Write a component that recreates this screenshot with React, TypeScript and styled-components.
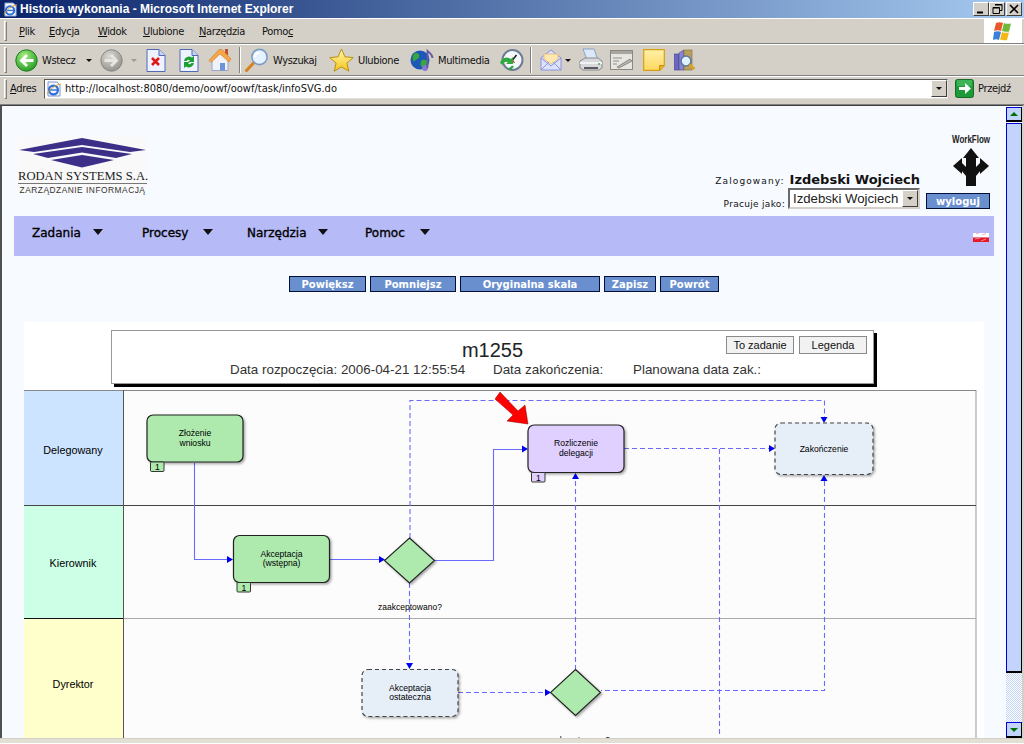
import React from "react";
import styled, { createGlobalStyle } from "styled-components";

const Global = createGlobalStyle`
  html, body { margin: 0; padding: 0; background: #d4d0c8; overflow: hidden; }
  * { box-sizing: border-box; }
  body { font-family: "DejaVu Sans", sans-serif; }
`;

const Window = styled.div`
  width: 1024px; height: 744px; display: flex; flex-direction: column; overflow: hidden; background: #d4d0c8;
`;
const TitleBar = styled.div`
  height: 18px; flex: none; display: flex; align-items: center; padding: 0 2px 0 3px;
  background: linear-gradient(90deg, #0a246a 0%, #a6caf0 100%);
`;
const TitleText = styled.span`
  margin-left: 2px; flex: 1; color: #fff; font: bold 12px "Liberation Sans", sans-serif; white-space: nowrap;
`;
const WinBtn = styled.button<{ $gap?: number }>`
  width: 16px; height: 14px; margin-left: ${p => p.$gap ?? 1}px; padding: 0; background: #d4d0c8; display: flex; align-items: center; justify-content: center;
  border: 1px solid; border-color: #fff #404040 #404040 #fff;
  svg { display: block; }
`;
const Row = styled.div<{ $h: number; $pb?: number }>`
  height: ${p => p.$h}px; flex: none; display: flex; align-items: center; position: relative;
  border-top: 1px solid #fff; border-bottom: 1px solid #808080; padding: 0 0 ${p => p.$pb ?? 0}px 4px;
`;
const Gripper = styled.i<{ $h: number; $mr: number }>`
  width: 3px; height: ${p => p.$h}px; flex: none; border: 1px solid; border-color: #fff #808080 #808080 #fff; margin-right: ${p => p.$mr}px;
`;
const MenuLabel = styled.span<{ $ml?: number; $w: number }>`
  margin-left: ${p => p.$ml ?? 0}px; width: ${p => p.$w}px; flex: none;
  font: 11px "DejaVu Sans", sans-serif; font-stretch: condensed; letter-spacing: -0.35px; color: #111; white-space: nowrap;
  u { text-decoration: underline; text-underline-offset: 1px; }
`;
const FlagBox = styled.div`
  margin-left: auto; margin-right: 2px; width: 38px; height: 24px; background: #fff; display: flex; align-items: center; justify-content: center;
`;
const ToolIcon = styled.svg<{ $ml?: number }>`
  flex: none; margin-left: ${p => p.$ml ?? 0}px; display: block;
`;
const Caret = styled.i<{ $ml: number; $gray?: boolean }>`
  flex: none; width: 0; height: 0; margin-left: ${p => p.$ml}px;
  border-left: 3px solid transparent; border-right: 3px solid transparent;
  border-top: 3px solid ${p => (p.$gray ? "#9a9a9a" : "#111")};
`;
const ToolSep = styled.i<{ $ml: number }>`
  flex: none; width: 2px; height: 26px; margin-left: ${p => p.$ml}px; border-left: 1px solid #808080; border-right: 1px solid #fff;
`;
const AddressInput = styled.div`
  margin-left: 6px; width: 904px; height: 20px; background: #fff; display: flex; align-items: center; padding-left: 1px;
  border: 1px solid; border-color: #5a5a5a #e4e2dc #e4e2dc #5a5a5a; position: relative;
`;
const Url = styled.span`
  margin-left: 3px; flex: 1; font: 11px "DejaVu Sans", sans-serif; font-stretch: condensed; letter-spacing: 0.02px; color: #111; white-space: nowrap;
`;
const DropBtn = styled.span`
  width: 16px; height: 17px; margin-right: 0; background: #d4d0c8; border: 1px solid; border-color: #fff #404040 #404040 #fff;
  display: flex; align-items: center; justify-content: center;
`;
const Viewport = styled.div`
  flex: 1; display: flex; min-height: 0; border-top: 1px solid #404040; border-left: 2px solid #505050; border-right: 2px solid #d4d0c8;
`;
const Page = styled.main`
  flex: 1; min-width: 0; overflow: hidden; background: #f7faff; padding: 0 12px;
`;
const Header = styled.header`
  height: 110px; display: flex; justify-content: space-between; padding: 0 4px 7px;
`;
const Logo = styled.div`
  margin-top: 31px; width: 129px; height: 56px; background: #f9f9f9; display: flex; flex-direction: column; align-items: center;
  svg { display: block; flex: none; }
`;
const LogoName = styled.div`
  margin-top: 1px; width: 129px; text-align: center; font: 12.6px/12px "Liberation Serif", serif; color: #222; white-space: nowrap; border-bottom: 1px solid #777; padding-bottom: 1px;
`;
const LogoSub = styled.div`
  margin-top: 1px; font: 8.4px/10px "Liberation Sans", sans-serif; letter-spacing: 0.5px; color: #333; white-space: nowrap;
`;
const HeaderRight = styled.div`
  display: flex; gap: 6px; align-items: flex-end;
`;
const UserCol = styled.div`
  display: flex; flex-direction: column; align-items: flex-end; gap: 0;
`;
const UserLine = styled.div`
  display: flex; align-items: flex-end; gap: 3px; height: 21px;
`;
const UserTop = styled.div`
  display: flex; align-items: baseline; gap: 5px; height: 16px; line-height: 16px;
`;
const SmallLabel = styled.span<{ $ls: number }>`
  font: 9px "DejaVu Sans", sans-serif; letter-spacing: ${p => p.$ls}px; color: #111; white-space: nowrap;
`;
const UserName = styled.span`
  font: bold 13px "DejaVu Sans", sans-serif; color: #111; white-space: nowrap;
`;
const SelectBox = styled.div`
  width: 132px; height: 21px; background: #fff; border: 2px solid; border-color: #6a6a6a #d4d0c8 #d4d0c8 #6a6a6a;
  display: flex; align-items: center; padding-left: 3px; justify-content: space-between;
`;
const SelectText = styled.span`
  font: 13.2px "Liberation Sans", sans-serif; color: #222; white-space: nowrap;
`;
const ActionCol = styled.div`
  width: 64px; display: flex; flex-direction: column; align-items: flex-end; height: 76px; justify-content: space-between;
`;
const WfLogo = styled.svg`
  display: block; overflow: visible;
`;
const BlueBtn = styled.button<{ $w: number }>`
  width: ${p => p.$w}px; height: 16px; padding: 0; background: #6a8fcf; border: 1px solid #00103a; color: #fff;
  font: bold 10px "DejaVu Sans", sans-serif; line-height: 13px; white-space: nowrap; flex: none;
`;
const MainMenu = styled.nav`
  height: 40px; background: #b6baf7; display: flex; align-items: center; padding-left: 18px;
`;
const MenuItem = styled.div<{ $w: number }>`
  width: ${p => p.$w}px; flex: none; display: flex; align-items: center; padding-bottom: 6px;
`;
const MenuText = styled.span<{ $w: number }>`
  font: 12px "DejaVu Sans", sans-serif; -webkit-text-stroke: 0.35px #000; color: #000; width: ${p => p.$w}px; white-space: nowrap;
`;
const MenuArrow = styled.i`
  width: 0; height: 0; margin-top: -3px; border-left: 5px solid transparent; border-right: 5px solid transparent; border-top: 6px solid #111;
`;
const Flag = styled.svg`
  margin-left: auto; margin-right: 5px; margin-top: 2px; display: block;
`;
const ActionBar = styled.div`
  margin-top: 20px; display: flex; justify-content: center; gap: 4px;
`;
const Canvas = styled.section`
  margin: 30px 10px 0; background: #fff; height: 440px; padding-top: 8px;
`;
const InfoCard = styled.div`
  margin-left: 87px; width: 763px; height: 54px; background: #fff; border: 1px solid #999; box-shadow: 3px 3px 0 #000;
  font-family: "Liberation Sans", sans-serif; color: #333;
`;
const CardTop = styled.div`
  display: grid; grid-template-columns: 1fr auto 1fr; height: 31px; padding: 5px 6px 0;
`;
const CardTitle = styled.div`
  grid-column: 2; font-size: 20px; line-height: 24px; margin-top: 2px; color: #222;
`;
const CardBtns = styled.div`
  grid-column: 3; display: flex; justify-content: flex-end; gap: 5px;
`;
const CardBtn = styled.button`
  width: 68px; height: 18px; padding: 0; background: #f2f2f2; border: 1px solid #8a8a8a; font: 11px "Liberation Sans", sans-serif; color: #111;
`;
const CardInfo = styled.div`
  display: flex; padding-left: 118px; font-size: 13.4px; line-height: 16px;
`;
const CardField = styled.span<{ $w: number }>`
  width: ${p => p.$w}px; flex: none; white-space: nowrap;
`;
const Diagram = styled.svg`
  display: block; margin-top: 6px;
  text { font-family: "Liberation Sans", sans-serif; fill: #000; text-anchor: middle; }
`;
const Scrollbar = styled.aside`
  width: 16px; flex: none; background: #f7faff; display: flex; flex-direction: column; padding-top: 1px;
`;
const ScrollBtn = styled.div<{ $h: number }>`
  height: ${p => p.$h}px; flex: none; background: #c2d4fb; border: 1px solid #0000e0; border-right-color: #000; border-bottom: 2px solid #000;
  display: flex; align-items: center; justify-content: center;
`;
const ScrollTri = styled.i<{ $down?: boolean }>`
  width: 0; height: 0; border-left: 4px solid transparent; border-right: 4px solid transparent;
  ${p => (p.$down ? "border-top: 4px solid #007000;" : "border-bottom: 4px solid #007000;")}
`;
const ScrollThumb = styled.div`
  height: 550px; margin-top: 1px; flex: none; background: #c2d4fb; border: 1px solid #0000e0; border-right-color: #000; border-bottom: 2px solid #000;
`;
const ScrollTrack = styled.div`
  flex: 1; background: repeating-conic-gradient(#c2d4fb 0 25%, #fff 0 50%) 0 0 / 2px 2px;
`;
const StatusEdge = styled.div`
  height: 6px; flex: none; background: #e2dfd4; border-top: 1px solid #d4d0c8; border-bottom: 1px solid #fff;
`;

const IeIcon = ({ s = 16, ml = 0 }: { s?: number; ml?: number }) => (
  <ToolIcon $ml={ml} width={s} height={s} viewBox="0 0 16 16">
    <path d="M2 1h9l3 3v11H2z" fill="#f4f7ff" stroke="#7f93c8" />
    <circle cx="7.5" cy="9" r="4.4" fill="none" stroke="#2a70d8" strokeWidth="2.2" />
    <path d="M4 9h7" stroke="#2a70d8" strokeWidth="1.4" />
    <path d="M1 13C4 8 9 4 15 3" fill="none" stroke="#e8a020" strokeWidth="1" />
  </ToolIcon>
);

const NavIcon = ({ ml, dir, gray }: { ml: number; dir: "l" | "r"; gray?: boolean }) => {
  const id = gray ? "navg" : "navc";
  return (
    <ToolIcon $ml={ml} width={23} height={23} viewBox="0 0 23 23">
      <defs>
        <radialGradient id={id} cx="0.4" cy="0.3" r="0.8">
          <stop offset="0" stopColor={gray ? "#dcdad4" : "#a8ee80"} />
          <stop offset="1" stopColor={gray ? "#8c8a84" : "#18941c"} />
        </radialGradient>
      </defs>
      <circle cx="11.5" cy="11.5" r="10.7" fill={`url(#${id})`} stroke={gray ? "#8a8880" : "#1c7a20"} />
      <path
        d={dir === "l" ? "M4.5 11.5l6.5-6.5 2 2-3 3h8.5v3H10l3 3-2 2z" : "M18.5 11.5 12 5l-2 2 3 3H4.5v3H13l-3 3 2 2z"}
        fill={gray ? "#e8e6e0" : "#fff"}
      />
    </ToolIcon>
  );
};
const DocIcon = ({ ml, kind }: { ml: number; kind: "x" | "r" }) => (
  <ToolIcon $ml={ml} width={20} height={23} viewBox="0 0 20 23">
    <path d="M1 .5h12l6 6v16H1z" fill="#eef3ff" stroke="#5068b8" />
    <path d="M13 .5v6h6" fill="#c8d4f4" stroke="#5068b8" />
    {kind === "x" ? (
      <path d="M6 9l7 7M13 9l-7 7" stroke="#e01818" strokeWidth="2.6" />
    ) : (
      <>
        <path d="M5 12a5 5 0 0 1 8-3.5l2-1.5v6h-6l2-1.6a2.6 2.6 0 0 0-3.5 .6z" fill="#1ea030" />
        <path d="M15 14a5 5 0 0 1-8 3.5L5 19v-6h6l-2 1.6a2.6 2.6 0 0 0 3.5-.6z" fill="#1ea030" />
      </>
    )}
  </ToolIcon>
);
const HomeIcon = ({ ml }: { ml: number }) => (
  <ToolIcon $ml={ml} width={24} height={24} viewBox="0 0 24 24">
    <path d="M4 11v11.500h16V11L12 5z" fill="#f0f2fa" stroke="#9aa4c8" />
    <path d="M12 15h5v7.500h-5z" fill="#6c94d8" />
    <rect x="17" y="1" width="3" height="6" fill="#c05030" />
    <path d="M1 12.5 11 1.500h3L23 11l-2 3-9-8-9 8.500z" fill="#f4a648" stroke="#d07a28" strokeWidth=".6" />
  </ToolIcon>
);
const SearchIcon = ({ ml }: { ml: number }) => (
  <ToolIcon $ml={ml} width={24} height={24} viewBox="0 0 24 24">
    <path d="M8.5 15 1.5 22.5" stroke="#d8801c" strokeWidth="3" strokeLinecap="round" />
    <circle cx="14.5" cy="9" r="7.6" fill="#e6f2ff" stroke="#7c9cc4" strokeWidth="1.6" />
    <path d="M10 9a4.5 4.5 0 0 1 4.5-4.5" fill="none" stroke="#fff" strokeWidth="2" />
  </ToolIcon>
);
const StarIcon = ({ ml }: { ml: number }) => (
  <ToolIcon $ml={ml} width={25} height={24} viewBox="0 0 25 24">
    <defs>
      <linearGradient id="starg" x1="0" y1="0" x2="0" y2="1">
        <stop offset="0" stopColor="#fff8b0" />
        <stop offset="1" stopColor="#f8c418" />
      </linearGradient>
    </defs>
    <path d="M12.5 1l3.4 7.8 8.3.8-6.3 5.5 1.9 8.1-7.3-4.3-7.3 4.3 1.9-8.1L.8 9.6l8.3-.8z" fill="url(#starg)" stroke="#b89010" />
  </ToolIcon>
);
const MediaIcon = ({ ml }: { ml: number }) => (
  <ToolIcon $ml={ml} width={24} height={24} viewBox="0 0 24 24">
    <circle cx="10" cy="12" r="9.5" fill="#1c58b8" />
    <path d="M5 5c3 0 5 1 4 4s-4 2-5 5c-1-2-3-6 1-9zM12 12c3-1 6 0 5 3s-3 5-5 4-2-5 0-7z" fill="#38a838" />
    <circle cx="15" cy="20" r="3" fill="#8878d0" />
    <path d="M17.5 20V3c2 2 5 3 5 7" fill="none" stroke="#6458a8" strokeWidth="1.8" />
  </ToolIcon>
);
const HistoryIcon = ({ ml }: { ml: number }) => (
  <ToolIcon $ml={ml} width={25} height={24} viewBox="0 0 25 24">
    <circle cx="13.5" cy="12" r="10" fill="#f4f8fc" stroke="#6c7c94" strokeWidth="2" />
    <path d="M13.5 12l4-5" stroke="#222" strokeWidth="1.6" />
    <path d="M13.5 12l2 3" stroke="#c03020" strokeWidth="1.2" />
    <path d="M1 15a7 7 0 0 1 11-4l2-2v7H7l2-2a3.5 3.5 0 0 0-5 3z" fill="#30a840" />
    <path d="M10 21a6 6 0 0 0 4-3" stroke="#30a840" strokeWidth="2.4" fill="none" />
  </ToolIcon>
);
const MailIcon = ({ ml }: { ml: number }) => (
  <ToolIcon $ml={ml} width={22} height={24} viewBox="0 0 22 24">
    <path d="M1 10 11 2l10 8v12H1z" fill="#dce2fa" stroke="#8a94d8" />
    <path d="M4 11V6h14v5l-7 5z" fill="#fde8b0" stroke="#e8b070" strokeWidth=".7" />
    <path d="M1 22l8-8M21 22l-8-8M1 10l10 8 10-8" fill="none" stroke="#8a94d8" />
  </ToolIcon>
);
const PrintIcon = ({ ml }: { ml: number }) => (
  <ToolIcon $ml={ml} width={24} height={24} viewBox="0 0 24 24">
    <path d="M4 1h11l4 11H8z" fill="#dce8fa" stroke="#8aa0c4" />
    <path d="M1 13l5-3h13l4 3v7l-3 2H4l-3-2z" fill="#d8d8dc" stroke="#8a8a90" />
    <path d="M1 14h22v2H1z" fill="#f2f2f4" />
    <path d="M5 19h14v2H5z" fill="#5a5a60" />
    <circle cx="20" cy="16" r="1" fill="#40b840" />
  </ToolIcon>
);
const EditIcon = ({ ml }: { ml: number }) => (
  <ToolIcon $ml={ml} width={24} height={20} viewBox="0 0 24 20">
    <rect x=".5" y=".5" width="22" height="19" fill="#e8e6e0" stroke="#8a8880" />
    <rect x="1" y="1" width="21" height="3" fill="#a8a6a0" />
    <path d="M3 8h9M3 11h6M3 14h4" stroke="#908e88" />
    <path d="M7 17 20 9l2 2-13 7z" fill="#b8b6b0" stroke="#706e68" strokeWidth=".7" />
  </ToolIcon>
);
const NoteIcon = ({ ml }: { ml: number }) => (
  <ToolIcon $ml={ml} width={22} height={22} viewBox="0 0 22 22">
    <defs>
      <linearGradient id="noteg" x1="0" y1="0" x2="0" y2="1">
        <stop offset="0" stopColor="#fff0a8" />
        <stop offset="1" stopColor="#ffd860" />
      </linearGradient>
    </defs>
    <path d="M.7.7h20.6v16l-4.6 4.6H.7z" fill="url(#noteg)" stroke="#d8a010" strokeWidth="1.2" />
    <path d="M16.5 21v-4.5H21" fill="#e8b020" stroke="#c89010" />
  </ToolIcon>
);
const ResearchIcon = ({ ml }: { ml: number }) => (
  <ToolIcon $ml={ml} width={22} height={22} viewBox="0 0 22 22">
    <rect x="0" y="5" width="5" height="16" fill="#6c68c0" stroke="#48448c" strokeWidth=".6" />
    <path d="M5 4l5-3v20H5z" fill="#8884d8" stroke="#48448c" strokeWidth=".6" />
    <rect x="10" y="1" width="8" height="20" fill="#b8a060" stroke="#806c30" strokeWidth=".6" />
    <circle cx="12" cy="12" r="5" fill="#dff0ff" stroke="#5878a0" strokeWidth="1.6" />
    <path d="M15.5 15.5l5 4.5" stroke="#e0a020" strokeWidth="2.4" />
  </ToolIcon>
);
const GoIcon = () => (
  <ToolIcon $ml={7} width={19} height={19} viewBox="0 0 19 19">
    <rect x=".5" y=".5" width="18" height="18" rx="2" fill="#1c9a38" stroke="#186a28" />
    <path d="M2 1h15v6H2z" fill="#52c468" opacity=".6" />
    <path d="M4 8h6V4l6 5.5-6 5.5v-4H4z" fill="#fff" />
  </ToolIcon>
);
const XpFlag = () => (
  <ToolIcon width={21} height={19} viewBox="0 0 21 19">
    <path d="M3 1c2-1 5-1 7 0l-2 8c-2-1-5-1-7 0z" fill="#e8582c" />
    <path d="M11 1c2 1 5 1 7 .5l-2 8c-2 .5-5 0-7-.5z" fill="#70b838" />
    <path d="M1 10c2-1 5-1 7 0l-2 8c-2-1-4-1-6 0z" fill="#3a80d8" />
    <path d="M9 10c2 1 5 1 7 .5l-2 7.5c-2 .5-5 0-7-.5z" fill="#f4b818" />
  </ToolIcon>
);

const BLUE = "#0000f0";
const LINE = "#6a6aff";

type TriDir = "r" | "u" | "d";
const Tri = ({ x, y, d }: { x: number; y: number; d: TriDir }) => {
  const pts =
    d === "r"
      ? `${x},${y} ${x - 6},${y - 3.5} ${x - 6},${y + 3.5}`
      : d === "u"
      ? `${x},${y} ${x - 3.5},${y + 6} ${x + 3.5},${y + 6}`
      : `${x},${y} ${x - 3.5},${y - 6} ${x + 3.5},${y - 6}`;
  return <polygon points={pts} fill={BLUE} />;
};
const Wire = ({ d, dashed }: { d: string; dashed?: boolean }) => (
  <path d={d} fill="none" stroke={LINE} strokeWidth="1.1" strokeDasharray={dashed ? "5 3" : undefined} />
);
const TaskNode = ({ x, y, w, h, fill, lines, dashed, tag }: { x: number; y: number; w: number; h: number; fill: string; lines: string[]; dashed?: boolean; tag?: number }) => (
  <g>
    <rect x={x} y={y} width={w} height={h} rx={6} fill={fill} stroke={dashed ? "#444" : "#222"} strokeWidth="1.2" strokeDasharray={dashed ? "4 3" : undefined} filter="url(#sh)" />
    {lines.map((l, i) => (
      <text key={l} x={x + w / 2} y={y + h / 2 + 3 - (lines.length - 1) * 4.5 + i * 9.5 + (lines.length === 1 ? 0 : -1)} fontSize="8.6">
        {l}
      </text>
    ))}
    {tag !== undefined && (
      <g>
        <rect x={tag} y={y + h} width={13.5} height={9.5} rx={1} fill={fill} stroke="#222" strokeWidth=".9" />
        <text x={tag + 7} y={y + h + 8} fontSize="8.6">1</text>
      </g>
    )}
  </g>
);
const Gate = ({ cx, cy, rx, ry }: { cx: number; cy: number; rx: number; ry: number }) => (
  <polygon points={`${cx},${cy - ry} ${cx + rx},${cy} ${cx},${cy + ry} ${cx - rx},${cy}`} fill="#aeeaae" stroke="#222" strokeWidth="1.1" filter="url(#sh)" />
);

const Swimlanes = () => (
  <Diagram width={960} height={356} viewBox="24 390 960 356">
    <defs>
      <filter id="sh" x="-10%" y="-10%" width="125%" height="125%">
        <feDropShadow dx="1.5" dy="1.5" stdDeviation="1" floodOpacity="0.35" />
      </filter>
    </defs>
    <rect x="123" y="390" width="853" height="360" fill="#fcfcfc" stroke="#999" />
    <rect x="24" y="390.5" width="99" height="115" fill="#cce4ff" />
    <rect x="24" y="505.5" width="99" height="113" fill="#ccffe6" />
    <rect x="24" y="618.5" width="99" height="130" fill="#ffffcc" />
    <path d="M24 390.5H976" stroke="#888" />
    <path d="M24 505.5H976" stroke="#444" />
    <path d="M24 618.5H123" stroke="#111" />
    <path d="M123 618.5H976" stroke="#aaa" />
    <path d="M123.5 390V750" stroke="#555" />
    <text x="73" y="454" fontSize="10.8">Delegowany</text>
    <text x="73" y="567" fontSize="10.8">Kierownik</text>
    <text x="73" y="688" fontSize="10.8">Dyrektor</text>

    <Wire d="M194.5 463V559.5H228" />
    <Wire d="M329 559.5H380" />
    <Wire d="M434 560.5H493.5V449.5H523" />
    <Wire dashed d="M410 538V400.5H824.5V417" />
    <Wire dashed d="M624 448.5H770" />
    <Wire dashed d="M409.5 583V663" />
    <Wire dashed d="M575.5 670V479" />
    <Wire dashed d="M719.5 449V735" />
    <Wire dashed d="M824.5 481V690.5H601" />
    <Wire dashed d="M458 692.5H546" />
    <Tri x={233} y={559.5} d="r" />
    <Tri x={385} y={559.5} d="r" />
    <Tri x={528} y={449} d="r" />
    <Tri x={775} y={448.5} d="r" />
    <Tri x={824} y={423} d="d" />
    <Tri x={409.5} y={669} d="d" />
    <Tri x={575.5} y={473} d="u" />
    <Tri x={824} y={475} d="u" />
    <Tri x={551} y={692.5} d="r" />

    <TaskNode x={147} y={415} w={96} h={47} fill="#aeeaae" lines={["Złożenie", "wniosku"]} tag={150.5} />
    <TaskNode x={233.5} y={535.5} w={96} h={47} fill="#aeeaae" lines={["Akceptacja", "(wstępna)"]} tag={237} />
    <TaskNode x={528} y={425} w={96} h={47.5} fill="#e0d0ff" lines={["Rozliczenie", "delegacji"]} tag={531.5} />
    <TaskNode x={775} y={423} w={98} h={51.5} fill="#e6eef8" lines={["Zakończenie"]} dashed />
    <TaskNode x={362} y={669.5} w={96} h={47} fill="#e6eef8" lines={["Akceptacja", "ostateczna"]} dashed />
    <Gate cx={409.5} cy={560.5} rx={25} ry={22.5} />
    <Gate cx={575.5} cy={692.5} rx={25} ry={23} />
    <text x="410" y="610" fontSize="8.5">zaakceptowano?</text>
    <polygon points="495,399 500,392 518,411 525,405 528,424 507,421 513,415" fill="#ff0000" stroke="#900000" strokeWidth=".5" />
    <text x="578" y="743" fontSize="8.5">zaakceptowano?</text>
  </Diagram>
);

const toolMenu = [
  ["P", "lik", 0, 15],
  ["E", "dycja", 15, 32],
  ["W", "idok", 17, 29],
  ["U", "lubione", 16, 40],
  ["N", "arzędzia", 16, 47],
  ["Pomo", "c", 16, 31],
] as const;

export default function App() {
  return (
    <Window>
      <Global />
      <TitleBar>
        <IeIcon s={15} />
        <TitleText>Historia wykonania - Microsoft Internet Explorer</TitleText>
        <WinBtn>
          <svg width="10" height="10" viewBox="0 0 10 10"><path d="M1 7.5h6v2H1z" fill="#000" /></svg>
        </WinBtn>
        <WinBtn $gap={0}>
          <svg width="11" height="10" viewBox="0 0 11 10"><path d="M3 .5h7v6H8M1 3.5h6.5v6H1zM3 1h7M1 4h6.5" fill="none" stroke="#000" /></svg>
        </WinBtn>
        <WinBtn $gap={1}>
          <svg width="10" height="10" viewBox="0 0 10 10"><path d="M1 1l8 8M9 1l-8 8" stroke="#000" strokeWidth="1.6" /></svg>
        </WinBtn>
      </TitleBar>

      <Row $h={26}>
        <Gripper $h={20} $mr={12} />
        {toolMenu.map(([a, b, ml, w]) =>
          a === "Pomo" ? (
            <MenuLabel key={a} $ml={ml} $w={w}>{a}<u>{b}</u></MenuLabel>
          ) : (
            <MenuLabel key={a} $ml={ml} $w={w}><u>{a}</u>{b}</MenuLabel>
          )
        )}
        <FlagBox><XpFlag /></FlagBox>
      </Row>

      <Row $h={32}>
        <Gripper $h={26} $mr={8} />
        <NavIcon ml={0} dir="l" />
        <MenuLabel $ml={4} $w={34}>Wstecz</MenuLabel>
        <Caret $ml={10} />
        <NavIcon ml={8} dir="r" gray />
        <Caret $ml={8} $gray />
        <DocIcon ml={9} kind="x" />
        <DocIcon ml={13} kind="r" />
        <HomeIcon ml={9} />
        <ToolSep $ml={7} />
        <SearchIcon ml={4} />
        <MenuLabel $ml={4} $w={46}>Wyszukaj</MenuLabel>
        <StarIcon ml={10} />
        <MenuLabel $ml={4} $w={40}>Ulubione</MenuLabel>
        <MediaIcon ml={12} />
        <MenuLabel $ml={4} $w={50}>Multimedia</MenuLabel>
        <HistoryIcon ml={11} />
        <ToolSep $ml={6} />
        <MailIcon ml={8} />
        <Caret $ml={3} />
        <PrintIcon ml={8} />
        <EditIcon ml={7} />
        <NoteIcon ml={9} />
        <ResearchIcon ml={9} />
      </Row>

      <Row $h={29} $pb={4}>
        <Gripper $h={20} $mr={3} />
        <MenuLabel $w={28}><u>A</u>dres</MenuLabel>
        <AddressInput>
          <IeIcon />
          <Url>http://localhost:8080/demo/oowf/oowf/task/infoSVG.do</Url>
          <DropBtn><Caret $ml={0} /></DropBtn>
        </AddressInput>
        <GoIcon />
        <MenuLabel $ml={4} $w={36}>Przejdź</MenuLabel>
      </Row>

      <Viewport>
        <Page>
          <Header>
            <Logo>
              <svg width="129" height="32" viewBox="0 0 129 32">
                <polygon points="1,13 64,1 128,13 112,15 64,8 16,15" fill="#3b2f87" />
                <polygon points="15,17 64,10 114,17 98,21 64,15.500 30,21" fill="#3b2f87" />
                <polygon points="33,23 64,18 96,23 64,30.500" fill="#3b2f87" />
              </svg>
              <LogoName>RODAN SYSTEMS S.A.</LogoName>
              <LogoSub>ZARZĄDZANIE INFORMACJĄ</LogoSub>
            </Logo>
            <HeaderRight>
              <UserCol>
                <UserTop>
                  <SmallLabel $ls={1.1}>Zalogowany:</SmallLabel>
                  <UserName>Izdebski Wojciech</UserName>
                </UserTop>
                <UserLine>
                  <SmallLabel $ls={0.3}>Pracuje jako:</SmallLabel>
                  <SelectBox>
                    <SelectText>Izdebski Wojciech</SelectText>
                    <DropBtn><Caret $ml={0} /></DropBtn>
                  </SelectBox>
                </UserLine>
              </UserCol>
              <ActionCol>
                <WfLogo width="38" height="54" viewBox="0 0 38 54">
                  <text x="0" y="10" fontFamily="Liberation Sans" fontWeight="bold" fontSize="11.5" textLength="38" lengthAdjust="spacingAndGlyphs" fill="#222">WorkFlow</text>
                  <g fill="#111" transform="translate(1 15)">
                    <rect x="13" y="10" width="10" height="28" />
                    <polygon points="18,0 26,10 10,10" />
                    <polygon points="0,18 9,10 9,26" />
                    <polygon points="36,18 27,10 27,26" />
                    <polygon points="8,14 13,19 13,28 8,22" />
                    <polygon points="28,14 23,19 23,28 28,22" />
                  </g>
                </WfLogo>
                <BlueBtn $w={64}>wyloguj</BlueBtn>
              </ActionCol>
            </HeaderRight>
          </Header>

          <MainMenu>
            <MenuItem $w={110}><MenuText $w={61}>Zadania</MenuText><MenuArrow /></MenuItem>
            <MenuItem $w={105}><MenuText $w={61}>Procesy</MenuText><MenuArrow /></MenuItem>
            <MenuItem $w={118}><MenuText $w={71}>Narzędzia</MenuText><MenuArrow /></MenuItem>
            <MenuItem $w={80}><MenuText $w={55}>Pomoc</MenuText><MenuArrow /></MenuItem>
            <Flag width="16" height="10" viewBox="0 0 16 10">
              <path d="M0 1h16v4.500H0z" fill="#fff" />
              <path d="M0 5.500h16V10H0z" fill="#e81828" />
              <path d="M3 2l3-1M9 3l4-1.500M2 7l5-1M8 9l5-2" stroke="#f4a0a8" strokeWidth=".8" />
            </Flag>
          </MainMenu>

          <ActionBar>
            <BlueBtn $w={77}>Powiększ</BlueBtn>
            <BlueBtn $w={86}>Pomniejsz</BlueBtn>
            <BlueBtn $w={140}>Oryginalna skala</BlueBtn>
            <BlueBtn $w={52}>Zapisz</BlueBtn>
            <BlueBtn $w={59}>Powrót</BlueBtn>
          </ActionBar>

          <Canvas>
            <InfoCard>
              <CardTop>
                <CardTitle>m1255</CardTitle>
                <CardBtns>
                  <CardBtn>To zadanie</CardBtn>
                  <CardBtn>Legenda</CardBtn>
                </CardBtns>
              </CardTop>
              <CardInfo>
                <CardField $w={263}>Data rozpoczęcia: 2006-04-21 12:55:54</CardField>
                <CardField $w={140}>Data zakończenia:</CardField>
                <CardField $w={140}>Planowana data zak.:</CardField>
              </CardInfo>
            </InfoCard>
            <Swimlanes />
          </Canvas>
        </Page>
        <Scrollbar>
          <ScrollBtn $h={15}><ScrollTri /></ScrollBtn>
          <ScrollThumb />
          <ScrollTrack />
          <ScrollBtn $h={16}><ScrollTri $down /></ScrollBtn>
        </Scrollbar>
      </Viewport>
      <StatusEdge />
    </Window>
  );
}
